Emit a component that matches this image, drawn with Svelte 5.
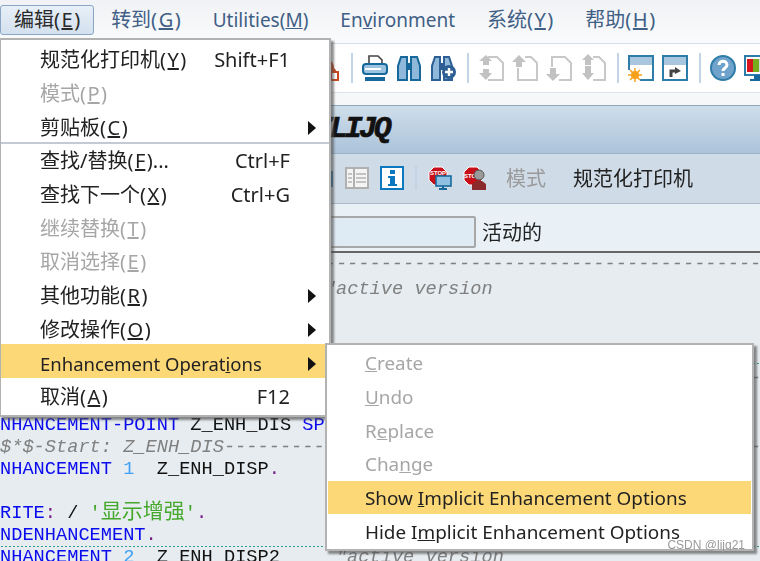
<script>
  const topMenus = [
    { label: "转到(", key: "G", rest: ")" },
    { label: "Utilities(", key: "M", rest: ")", latin: true },
    { label: "En", key: "v", rest: "ironment", latin: true },
    { label: "系统(", key: "Y", rest: ")" },
    { label: "帮助(", key: "H", rest: ")" }
  ];

  const editItems = [
    { pre: "规范化打印机(", key: "Y", post: ")", shortcut: "Shift+F1" },
    { pre: "模式(", key: "P", post: ")", off: true },
    { pre: "剪贴板(", key: "C", post: ")", sub: true, sep: true },
    { pre: "查找/替换(", key: "F", post: ")...", shortcut: "Ctrl+F" },
    { pre: "查找下一个(", key: "X", post: ")", shortcut: "Ctrl+G" },
    { pre: "继续替换(", key: "T", post: ")", off: true },
    { pre: "取消选择(", key: "E", post: ")", off: true },
    { pre: "其他功能(", key: "R", post: ")", sub: true },
    { pre: "修改操作(", key: "O", post: ")", sub: true },
    { pre: "Enhancement Operat", key: "i", post: "ons", sub: true, hot: true, latin: true },
    { pre: "取消(", key: "A", post: ")", shortcut: "F12" }
  ];

  const enhItems = [
    { pre: "", key: "C", post: "reate", off: true },
    { pre: "", key: "U", post: "ndo", off: true },
    { pre: "R", key: "e", post: "place", off: true },
    { pre: "Cha", key: "n", post: "ge", off: true },
    { pre: "Show ", key: "I", post: "mplicit Enhancement Options", hot: true },
    { pre: "Hide I", key: "m", post: "plicit Enhancement Options" }
  ];
</script>

<div class="screen">
  <nav class="menubar">
    <span class="top active">编辑(<u>E</u>)</span>
    {#each topMenus as m}
      <span class="top" class:latin={m.latin}>{m.label}<u>{m.key}</u>{m.rest}</span>
    {/each}
  </nav>

  <div class="toolbar">
    <svg class="tool" viewBox="0 0 26 30"><path d="M10 3c4 3 10 5 10 12 4 3 3 10-3 11H8z" fill="#c8481f"/><path d="M17 19h7v8h-7z" fill="#fff" stroke="#c8481f" stroke-width="2"/></svg>
    <i class="sep"></i>
    <svg class="tool" viewBox="0 0 26 30">
      <path d="M7 11V3h9l4 4v4" fill="#fff" stroke="#444" stroke-width="1.6"/>
      <rect x="1" y="11" width="24" height="10" rx="3" fill="#9cc3df" stroke="#17699b" stroke-width="2"/>
      <rect x="3" y="15" width="16" height="2" fill="#fff"/>
      <rect x="3" y="24" width="20" height="4" fill="#17699b"/>
    </svg>
    <svg class="tool" viewBox="0 0 26 30">
      <path d="M2 27V13l3-9h6v23zM15 27V4h6l3 9v14z" fill="#8fb8da" stroke="#17699b" stroke-width="2"/>
      <path d="M11 10h4v7h-4z" fill="#17699b"/>
    </svg>
    <svg class="tool" viewBox="0 0 26 30">
      <path d="M2 27V13l3-9h5v23zM14 27V4h5l3 9v14z" fill="#8fb8da" stroke="#2d5f95" stroke-width="2"/>
      <path d="M10 10h4v7h-4z" fill="#2d5f95"/>
      <circle cx="19" cy="19" r="7" fill="#2d5f95"/>
      <path d="M15 19h8M19 15v8" stroke="#fff" stroke-width="2.4"/>
    </svg>
    <i class="sep"></i>
    <svg class="tool" viewBox="0 0 26 30">
      <path d="M10 4h9l6 6v17H10" fill="none" stroke="#c8c8c8" stroke-width="2"/>
      <path d="M8 2l6 6h-3v4H5V8H1zM5 16h6v4h3l-6 7-7-7h4z" fill="#c2c2c2"/>
    </svg>
    <svg class="tool" viewBox="0 0 26 30">
      <path d="M13 4h6l6 6v17H6V15" fill="none" stroke="#c8c8c8" stroke-width="2"/>
      <path d="M7 2l7 7h-4v5H4V9H0z" fill="#c2c2c2"/>
    </svg>
    <svg class="tool" viewBox="0 0 26 30">
      <path d="M6 14V4h13l6 6v17H13" fill="none" stroke="#c8c8c8" stroke-width="2"/>
      <path d="M4 15h6v6h4l-7 7-7-7h4z" fill="#c2c2c2"/>
    </svg>
    <svg class="tool" viewBox="0 0 26 30">
      <path d="M13 4h6l6 6v17H13" fill="none" stroke="#c8c8c8" stroke-width="2"/>
      <path d="M8 1l6 6h-3v5H5V7H2zM5 13h6v7h3l-6 7-6-7h3z" fill="#c2c2c2"/>
    </svg>
    <i class="sep"></i>
    <svg class="tool" viewBox="0 0 26 30">
      <rect x="1" y="3" width="24" height="24" fill="#fff" stroke="#2e7ca8" stroke-width="2"/>
      <rect x="2" y="4" width="22" height="8" fill="#a9c6df"/>
      <path d="M0 29h12V17H0z" fill="#fff"/>
      <circle cx="7" cy="22" r="4" fill="#f7a11a"/>
      <path d="M7 15v14M0 22h14M2 17l10 10M12 17L2 27" stroke="#f7a11a" stroke-width="1.5"/>
    </svg>
    <svg class="tool" viewBox="0 0 26 30">
      <rect x="1" y="3" width="24" height="24" fill="#fff" stroke="#2e7ca8" stroke-width="2"/>
      <rect x="2" y="4" width="22" height="8" fill="#a9c6df"/>
      <path d="M9 24v-6h6" fill="none" stroke="#444" stroke-width="3"/>
      <path d="M13 14l6 4-6 3z" fill="#444"/>
    </svg>
    <i class="sep"></i>
    <svg class="tool" viewBox="0 0 26 30">
      <circle cx="13" cy="15" r="12" fill="#6fa3cb" stroke="#2e7ca8" stroke-width="2"/>
      <path d="M9 12c0-5 8-5 8 0 0 3-4 3-4 6" fill="none" stroke="#fff" stroke-width="3"/>
      <rect x="11.5" y="20" width="3" height="3" fill="#fff"/>
    </svg>
    <svg class="tool" viewBox="0 0 26 30">
      <rect x="1" y="3" width="24" height="19" fill="#fff" stroke="#2e7ca8" stroke-width="2"/>
      <rect x="3" y="6" width="6" height="13" fill="#d8141c"/>
      <rect x="9" y="6" width="6" height="13" fill="#76ad1c"/>
      <rect x="15" y="6" width="8" height="13" fill="#d3d8dc"/>
      <path d="M10 22h6v4h4v2H6v-2h4z" fill="#17699b"/>
    </svg>
  </div>

  <div class="strip"></div>

  <div class="titlebar"><span>ZLIJQ</span></div>

  <div class="appbar">
    <svg class="app-icon" viewBox="0 0 24 24"><rect x="2" y="6" width="20" height="14" fill="none" stroke="#2e7ca8" stroke-width="2"/></svg>
    <svg class="app-icon" viewBox="0 0 24 24">
      <rect x="1" y="2" width="22" height="20" fill="#f4f4f4" stroke="#b0b0b0" stroke-width="2"/>
      <path d="M9 3v18" stroke="#b0b0b0" stroke-width="2"/>
      <path d="M3 8h4M3 12h4M3 16h4M11 8h10M11 12h10M11 16h10" stroke="#c4c4c4" stroke-width="2"/>
    </svg>
    <svg class="app-icon" viewBox="0 0 24 24">
      <rect x="1" y="1" width="22" height="22" fill="#fff" stroke="#0b78bf" stroke-width="2"/>
      <rect x="10" y="4" width="5" height="4" fill="#0b78bf"/>
      <path d="M8 10h7v8h2v2H8v-2h2v-6H8z" fill="#0b78bf"/>
    </svg>
    <i class="sep short"></i>
    <svg class="app-icon" viewBox="0 0 24 24">
      <path d="M6 1h8l5 5v8l-5 5H6l-5-5V6z" fill="#c70f17" stroke="#fff"/>
      <text x="10" y="9" class="stop-text">STOP</text>
      <rect x="8" y="10" width="15" height="10" fill="#8fc0e2" stroke="#17699b" stroke-width="1.6"/>
      <path d="M15 20v2M11 23h8" stroke="#17699b" stroke-width="2"/>
    </svg>
    <svg class="app-icon" viewBox="0 0 24 24">
      <path d="M6 1h8l5 5v8l-5 5H6l-5-5V6z" fill="#c70f17" stroke="#fff"/>
      <text x="7" y="12" class="stop-text">STO</text>
      <circle cx="16" cy="9" r="5" fill="#9a9a9a" stroke="#555"/>
      <path d="M9 24v-6l4-3h6l4 3v6z" fill="#8a2a2a"/>
    </svg>
    <span class="app-text off">模式</span>
    <span class="app-text">规范化打印机</span>
  </div>

  <div class="fieldrow">
    <div class="field"></div>
    <span>活动的</span>
  </div>

  <div class="editor">
    <div class="code first">
      <div class="gray">---------------------------------------------------------------------</div>
      <div class="gray indent">"active version</div>
    </div>
    <div class="code second">
      <div class="gray">*$*$-End:   Z_ENH_DIS------------------------------------------------</div>
      <div class="blank"></div>
      <div><b>ENHANCEMENT-POINT</b> Z_ENH_DIS <b>SPOTS</b> Z_ENH.</div>
      <div class="gray">*$*$-Start: Z_ENH_DIS------------------------------------------------</div>
      <div><b>ENHANCEMENT</b> <em>1</em>{"  "}Z_ENH_DISP<s>.</s></div>
      <div></div>
      <div><b>WRITE</b><s>:</s> / <ins>'<span class="cjk">显示增强</span>'</ins><s>.</s></div>
      <div><b>ENDENHANCEMENT</b><s>.</s></div>
      <div class="dotted"><b>ENHANCEMENT</b> <em>2</em>{"  "}Z_ENH_DISP2{"     "}<span class="gray">"active version</span></div>
    </div>
  </div>

  <div class="menu edit-menu">
    {#each editItems as it}
      <div class="row" class:off={it.off} class:hot={it.hot}>
        <span class="label" class:latin={it.latin}>{it.pre}<u>{it.key}</u>{it.post}</span>
        {#if it.shortcut}<span class="shortcut">{it.shortcut}</span>{/if}
        {#if it.sub}<i class="arrow"></i>{/if}
      </div>
      {#if it.sep}<div class="divider"></div>{/if}
    {/each}
  </div>

  <div class="menu enh-menu">
    {#each enhItems as it}
      <div class="row" class:off={it.off} class:hot={it.hot}>
        <span class="label latin">{it.pre}<u>{it.key}</u>{it.post}</span>
      </div>
    {/each}
  </div>

  <div class="watermark">CSDN @lijq21</div>
</div>

<style>
  :global(body) {
    margin: 0;
    background: #e6ecf0;
  }

  .screen {
    position: relative;
    width: 760px;
    height: 561px;
    overflow: hidden;
    font-family: "Noto Sans", "Noto Sans CJK SC", sans-serif;
    font-size: 20px;
    color: #222;
    filter: blur(0.5px);
  }

  u {
    margin: 0 1.5px;
  }

  .latin u {
    margin: 0;
  }

  .menubar {
    height: 44px;
    box-sizing: border-box;
    display: flex;
    align-items: center;
    gap: 2px;
    padding-bottom: 3px;
    background: linear-gradient(#f1f2f5, #fafbfc);
    border-bottom: 1px solid #d5deea;
    color: #3f5f86;
    white-space: nowrap;
  }

  .top {
    box-sizing: border-box;
    height: 30px;
    line-height: 28px;
    padding: 0 14px;
    border: 1px solid transparent;
  }

  .top.latin {
    font-size: 19px;
  }

  .top.active {
    color: #2a2a2a;
    padding: 0 13px;
    border-color: #8aa6c4;
    border-radius: 3px;
    background: linear-gradient(#e8f0f8, #d3e0ee);
  }

  .toolbar {
    height: 49px;
    box-sizing: border-box;
    display: flex;
    align-items: center;
    gap: 8px;
    padding-left: 314px;
    background: #fff;
    border-bottom: 1px solid #dde3ea;
  }

  .tool {
    flex: none;
    width: 26px;
    height: 30px;
  }

  .sep {
    flex: none;
    width: 2px;
    height: 30px;
    margin: 0 1px 0 3px;
    background: #c3d5e5;
  }

  .strip {
    height: 12px;
    background: #f6f7f9;
    border-bottom: 1px solid #8fa4b8;
  }

  .titlebar {
    height: 48px;
    box-sizing: border-box;
    padding-left: 315px;
    background: linear-gradient(#cfdeeb, #abc3da);
    border-bottom: 1px solid #9fb3c7;
    font: italic bold 30px/46px "Liberation Mono", monospace;
    letter-spacing: -3.3px;
    -webkit-text-stroke: 0.7px #111;
    color: #111;
  }

  .appbar {
    height: 50px;
    box-sizing: border-box;
    display: flex;
    align-items: center;
    gap: 11px;
    padding-left: 310px;
    padding-bottom: 2px;
    background: #cfdbe6;
    border-bottom: 1px solid #a8bacc;
    color: #222;
    white-space: nowrap;
  }

  .app-icon {
    flex: none;
    width: 24px;
    height: 24px;
  }

  .stop-text {
    font: bold 6px "Liberation Sans", sans-serif;
    fill: #fff;
    text-anchor: middle;
  }

  .sep.short {
    height: 24px;
    margin: 0;
  }

  .app-text {
    margin-left: 8px;
  }

  .app-text + .app-text {
    margin-left: 16px;
  }

  .app-text.off {
    color: #9b9b9b;
  }

  .fieldrow {
    height: 49px;
    box-sizing: border-box;
    display: flex;
    align-items: center;
    gap: 6px;
    padding-left: 200px;
    padding-top: 8px;
    background: #e9f0f6;
    border-bottom: 2px solid #666;
  }

  .field {
    width: 276px;
    height: 32px;
    box-sizing: border-box;
    background: #deeaf4;
    border: 2px solid #a8a8a8;
    border-radius: 2px;
  }

  .editor {
    display: flex;
    flex-direction: column;
  }

  .code {
    font: 18.67px/22px "Liberation Mono", "Noto Sans CJK SC", monospace;
    color: #111;
    margin-left: -11.2px;
  }

  .code > div {
    height: 22px;
    white-space: pre;
  }

  .code > .blank {
    height: 25px;
  }

  .code b {
    font-weight: normal;
    color: #0a0aee;
  }

  .code em {
    font-style: normal;
    color: #3fa0f5;
  }

  .code s {
    text-decoration: none;
    color: #7a1f8a;
  }

  .code ins {
    text-decoration: none;
    color: #45a82c;
  }

  .cjk {
    font-size: 21px;
  }

  .gray {
    font-style: italic;
    color: #808080;
  }

  .indent {
    margin-top: 3px;
    padding-left: 336px;
  }

  .second {
    margin-top: 63px;
    padding-top: 4px;
    background: linear-gradient(90deg, #2f9c95 50%, transparent 50%) 0 0 / 4px 1px repeat-x;
  }

  .dotted {
    background: linear-gradient(90deg, #2f9c95 50%, transparent 50%) 0 0 / 4px 1px repeat-x;
  }

  .menu {
    position: absolute;
    box-sizing: border-box;
    background: #fff;
    border: 2px solid #b2b2b2;
    padding-top: 1px;
    box-shadow: 3px 3px 2px rgba(80, 80, 80, 0.65);
    white-space: nowrap;
  }

  .edit-menu {
    left: -1px;
    top: 38px;
    width: 332px;
    height: 379px;
  }

  .enh-menu {
    left: 325px;
    top: 343px;
    width: 429px;
    height: 208px;
  }

  .row {
    height: 33.7px;
    box-sizing: border-box;
    line-height: 28px;
    display: flex;
    align-items: center;
    padding: 5px 13px 0 39px;
  }

  .enh-menu .row {
    padding: 1px 0 0 37px;
    margin: 0 1px;
  }

  .row.off {
    color: #a6a6a6;
  }

  .row.hot {
    background: #fdd877;
  }

  .label.latin {
    font-size: 18.5px;
  }

  .enh-menu .label.latin {
    font-size: 18.9px;
  }

  .shortcut {
    margin-left: auto;
    margin-right: 26px;
  }

  .arrow {
    margin-left: auto;
    width: 0;
    height: 0;
    border-left: 8px solid #111;
    border-top: 7px solid transparent;
    border-bottom: 7px solid transparent;
  }

  .divider {
    height: 2px;
    margin-bottom: -2px;
    background: #c3cad3;
  }

  .watermark {
    position: absolute;
    right: 15px;
    bottom: 9px;
    font: 12px "Liberation Sans", sans-serif;
    color: #9a9a9a;
  }
</style>
